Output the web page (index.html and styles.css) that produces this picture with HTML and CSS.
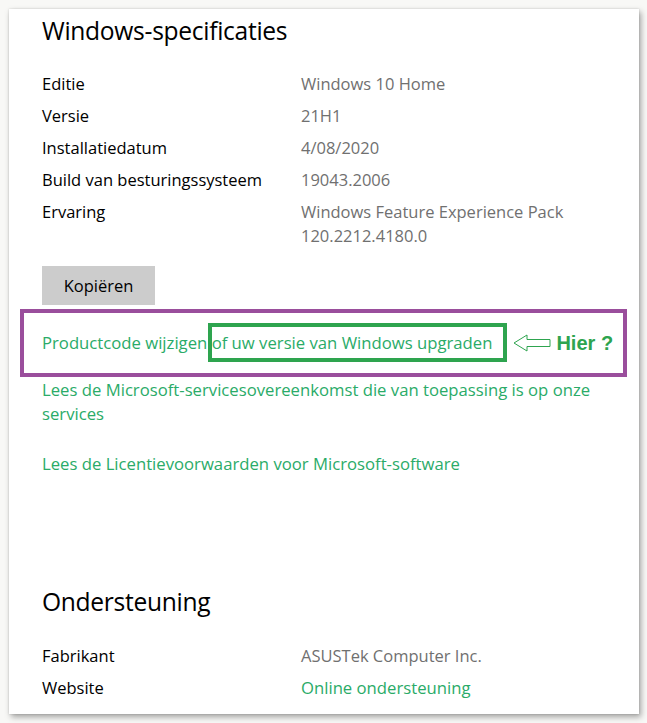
FILE: index.html
```html
<!DOCTYPE html>
<html lang="nl">
<head>
    <meta charset="UTF-8">
    <meta name="viewport" content="width=device-width, initial-scale=1.0">
    <title>Windows-specificaties</title>
    <link rel="stylesheet" href="styles.css">
</head>
<body>
    <div class="panel">
        <h1>Windows-specificaties</h1>

        <div class="spec-list">
            <div class="label">Editie</div>
            <div class="value">Windows 10 Home</div>
            <div class="label">Versie</div>
            <div class="value">21H1</div>
            <div class="label">Installatiedatum</div>
            <div class="value">4/08/2020</div>
            <div class="label">Build van besturingssysteem</div>
            <div class="value">19043.2006</div>
            <div class="label">Ervaring</div>
            <div class="value">Windows Feature Experience Pack<br>120.2212.4180.0</div>
        </div>

        <button class="copy-btn">Kopiëren</button>

        <div class="highlight-row">
            <a class="link" href="#">Productcode wijzigen <span class="marked">of uw versie van Windows upgraden</span></a>
            <span class="hint">
                <svg class="arrow" width="38" height="20" viewBox="0 0 38 20">
                    <path d="M1 10 L14 2 L14 6.5 L37 6.5 L37 13.5 L14 13.5 L14 18 Z" fill="#fff" stroke="#2ea44f" stroke-width="1"/>
                </svg>
                <span class="hier">Hier ?</span>
            </span>
        </div>

        <a class="link block-link agreement" href="#">Lees de Microsoft-servicesovereenkomst die van toepassing is op onze services</a>
        <a class="link block-link license" href="#">Lees de Licentievoorwaarden voor Microsoft-software</a>

        <h2>Ondersteuning</h2>

        <div class="spec-list support">
            <div class="label">Fabrikant</div>
            <div class="value">ASUSTek Computer Inc.</div>
            <div class="label">Website</div>
            <div class="value"><a class="link" href="#">Online ondersteuning</a></div>
        </div>
    </div>
</body>
</html>
```

FILE: styles.css
```css
body {
    margin: 0;
    padding: 9px 8px 9px 9px;
    background: #f8f8f6;
    font-family: 'Open Sans', 'Noto Sans', sans-serif;
    color: #000;
}
.panel {
    background: #fff;
    padding: 2px 12px 13px 33px;
    box-shadow: 2px 3px 6px rgba(0, 0, 0, 0.35), 0 0 2px rgba(0, 0, 0, 0.15);
    min-height: 705px;
    box-sizing: border-box;
}
h1, h2 {
    font-weight: 400;
    font-size: 24.6px;
    line-height: 40px;
    margin: 0;
    letter-spacing: -0.3px;
}
h2 {
    margin-top: 106px;
}
.spec-list {
    display: grid;
    grid-template-columns: 259px 1fr;
    row-gap: 8px;
    margin-top: 21px;
    font-size: 16.5px;
    line-height: 24px;
}
.spec-list.support {
    margin-top: 22px;
}
.value {
    color: #707070;
}
.copy-btn {
    display: block;
    margin-top: 18px;
    width: 113px;
    height: 39px;
    border: none;
    background: #cccccc;
    font-family: inherit;
    font-size: 16.5px;
    color: #000;
    padding: 0;
}
.link {
    color: #2aab68;
    text-decoration: none;
    font-size: 16.7px;
    line-height: 24px;
}
.highlight-row {
    display: flex;
    align-items: center;
    margin: 4px 0 0 -22px;
    width: 607px;
    height: 68px;
    box-sizing: border-box;
    border: 4px solid #9a4e9c;
    padding-left: 18px;
}
.marked {
    position: relative;
}
.marked::after {
    content: "";
    position: absolute;
    left: -4px;
    right: -15px;
    top: -8px;
    bottom: -8px;
    border: 4px solid #2ea44f;
}
.hint {
    display: flex;
    align-items: center;
    margin-left: 21px;
}
.arrow {
    display: block;
}
.hier {
    margin-left: 5px;
    color: #2ea44f;
    font-weight: 700;
    font-size: 20px;
    font-family: 'Liberation Sans', Arial, sans-serif;
}
.block-link {
    display: block;
    width: 560px;
}
.agreement {
    margin-top: 1px;
}
.license {
    margin-top: 26px;
}
```
